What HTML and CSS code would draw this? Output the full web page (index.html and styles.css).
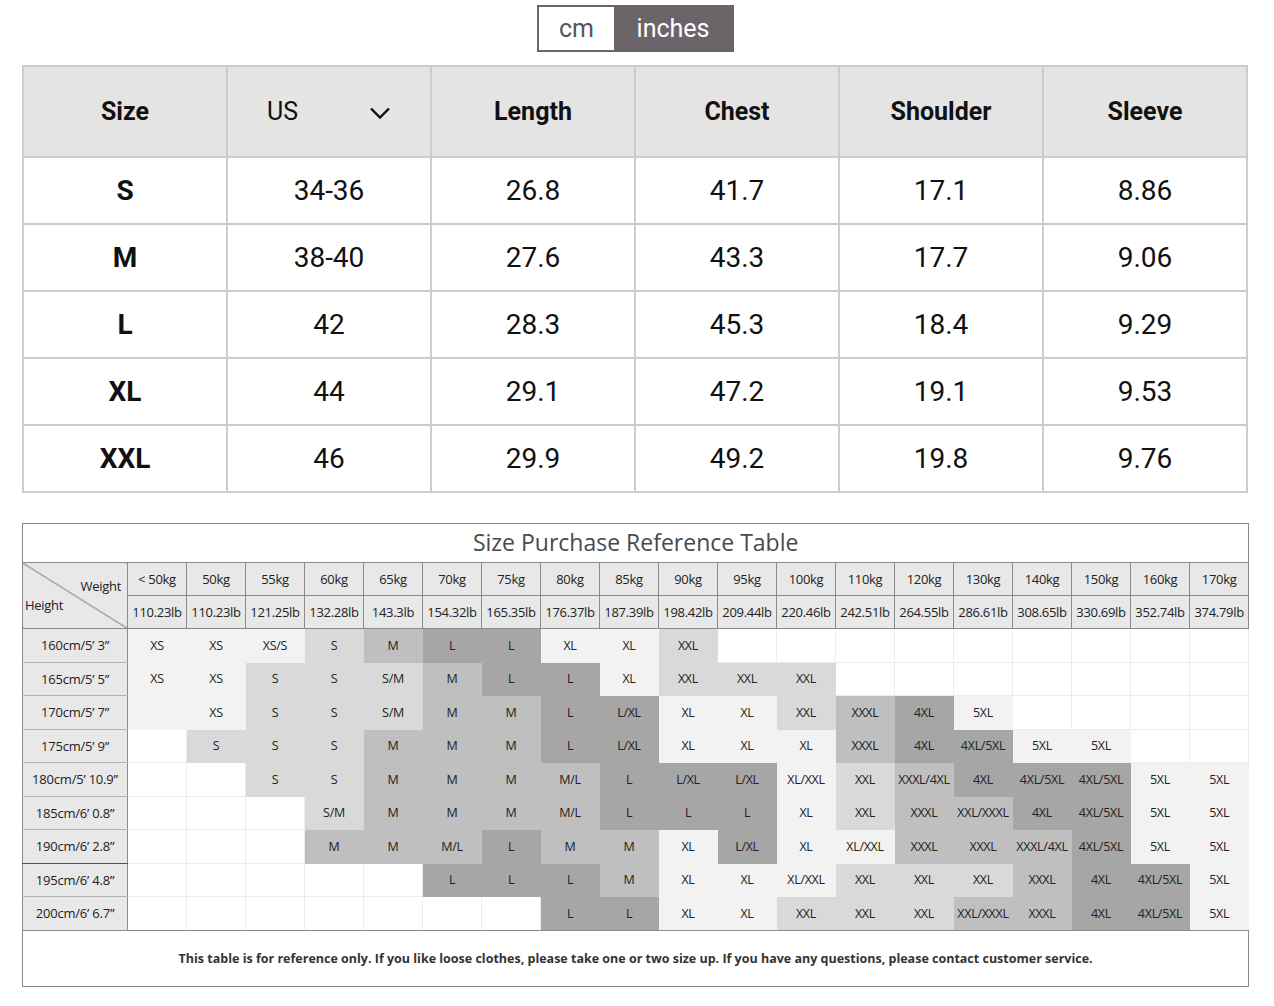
FILE: index.html
```html
<!DOCTYPE html>
<html lang="en">
<head>
<meta charset="utf-8">
<title>Size Chart</title>
<link rel="stylesheet" href="styles.css">
</head>
<body>
<div class="page">
  <div class="toggle-wrap">
    <div class="toggle">
      <span class="opt">cm</span>
      <span class="opt active">inches</span>
    </div>
  </div>

  <table class="size-table">
    <thead>
      <tr>
        <th>Size</th>
        <th class="us-cell"><div class="select"><span>US</span><svg width="22" height="14" viewBox="0 0 22 14"><polyline points="2,2.5 11,11.5 20,2.5" fill="none" stroke="#111" stroke-width="2.4"/></svg></div></th>
        <th>Length</th>
        <th>Chest</th>
        <th>Shoulder</th>
        <th>Sleeve</th>
      </tr>
    </thead>
    <tbody>
      <tr><td class="sz">S</td><td>34-36</td><td>26.8</td><td>41.7</td><td>17.1</td><td>8.86</td></tr>
      <tr><td class="sz">M</td><td>38-40</td><td>27.6</td><td>43.3</td><td>17.7</td><td>9.06</td></tr>
      <tr><td class="sz">L</td><td>42</td><td>28.3</td><td>45.3</td><td>18.4</td><td>9.29</td></tr>
      <tr><td class="sz">XL</td><td>44</td><td>29.1</td><td>47.2</td><td>19.1</td><td>9.53</td></tr>
      <tr><td class="sz">XXL</td><td>46</td><td>29.9</td><td>49.2</td><td>19.8</td><td>9.76</td></tr>
    </tbody>
  </table>

  <table class="ref-table">
    <colgroup>
      <col class="lblcol">
      <col span="19" class="wcol">
    </colgroup>
    <tr><td class="title" colspan="20">Size Purchase Reference Table</td></tr>
    <tr class="hrow">
      <td class="corner" rowspan="2"><span class="w">Weight</span><span class="h">Height</span></td>
      <td>&lt; 50kg</td><td>50kg</td><td>55kg</td><td>60kg</td><td>65kg</td><td>70kg</td><td>75kg</td><td>80kg</td><td>85kg</td><td>90kg</td><td>95kg</td><td>100kg</td><td>110kg</td><td>120kg</td><td>130kg</td><td>140kg</td><td>150kg</td><td>160kg</td><td>170kg</td>
    </tr>
    <tr class="hrow">
      <td>110.23lb</td><td>110.23lb</td><td>121.25lb</td><td>132.28lb</td><td>143.3lb</td><td>154.32lb</td><td>165.35lb</td><td>176.37lb</td><td>187.39lb</td><td>198.42lb</td><td>209.44lb</td><td>220.46lb</td><td>242.51lb</td><td>264.55lb</td><td>286.61lb</td><td>308.65lb</td><td>330.69lb</td><td>352.74lb</td><td>374.79lb</td>
    </tr>
    <tr class="drow">
      <td class="lbl">160cm/5’ 3”</td>
      <td class="a">XS</td><td class="a">XS</td><td class="a">XS/S</td><td class="b">S</td><td class="c">M</td><td class="d">L</td><td class="d">L</td><td class="a">XL</td><td class="a">XL</td><td class="b">XXL</td><td></td><td></td><td></td><td></td><td></td><td></td><td></td><td></td><td></td>
    </tr>
    <tr class="drow">
      <td class="lbl">165cm/5’ 5”</td>
      <td class="a">XS</td><td class="a">XS</td><td class="b">S</td><td class="b">S</td><td class="b">S/M</td><td class="c">M</td><td class="d">L</td><td class="d">L</td><td class="a">XL</td><td class="b">XXL</td><td class="b">XXL</td><td class="b">XXL</td><td></td><td></td><td></td><td></td><td></td><td></td><td></td>
    </tr>
    <tr class="drow">
      <td class="lbl">170cm/5’ 7”</td>
      <td class="a"></td><td class="a">XS</td><td class="b">S</td><td class="b">S</td><td class="b">S/M</td><td class="c">M</td><td class="c">M</td><td class="d">L</td><td class="d">L/XL</td><td class="a">XL</td><td class="a">XL</td><td class="b">XXL</td><td class="c">XXXL</td><td class="d">4XL</td><td class="a">5XL</td><td></td><td></td><td></td><td></td>
    </tr>
    <tr class="drow">
      <td class="lbl">175cm/5’ 9”</td>
      <td></td><td class="b">S</td><td class="b">S</td><td class="b">S</td><td class="c">M</td><td class="c">M</td><td class="c">M</td><td class="d">L</td><td class="d">L/XL</td><td class="a">XL</td><td class="a">XL</td><td class="a">XL</td><td class="c">XXXL</td><td class="d">4XL</td><td class="d">4XL/5XL</td><td class="a">5XL</td><td class="a">5XL</td><td></td><td></td>
    </tr>
    <tr class="drow">
      <td class="lbl">180cm/5’ 10.9”</td>
      <td></td><td></td><td class="b">S</td><td class="b">S</td><td class="c">M</td><td class="c">M</td><td class="c">M</td><td class="c">M/L</td><td class="d">L</td><td class="d">L/XL</td><td class="d">L/XL</td><td class="a">XL/XXL</td><td class="b">XXL</td><td class="c">XXXL/4XL</td><td class="d">4XL</td><td class="d">4XL/5XL</td><td class="d">4XL/5XL</td><td class="a">5XL</td><td class="a">5XL</td>
    </tr>
    <tr class="drow">
      <td class="lbl">185cm/6’ 0.8”</td>
      <td></td><td></td><td></td><td class="b">S/M</td><td class="c">M</td><td class="c">M</td><td class="c">M</td><td class="c">M/L</td><td class="d">L</td><td class="d">L</td><td class="d">L</td><td class="a">XL</td><td class="b">XXL</td><td class="c">XXXL</td><td class="c">XXL/XXXL</td><td class="d">4XL</td><td class="d">4XL/5XL</td><td class="a">5XL</td><td class="a">5XL</td>
    </tr>
    <tr class="drow">
      <td class="lbl dark-bottom">190cm/6’ 2.8”</td>
      <td></td><td></td><td></td><td class="c">M</td><td class="c">M</td><td class="c">M/L</td><td class="d">L</td><td class="c">M</td><td class="c">M</td><td class="a">XL</td><td class="d">L/XL</td><td class="a">XL</td><td class="a">XL/XXL</td><td class="c">XXXL</td><td class="c">XXXL</td><td class="c">XXXL/4XL</td><td class="d">4XL/5XL</td><td class="a">5XL</td><td class="a">5XL</td>
    </tr>
    <tr class="drow">
      <td class="lbl">195cm/6’ 4.8”</td>
      <td></td><td></td><td></td><td></td><td></td><td class="d">L</td><td class="d">L</td><td class="d">L</td><td class="c">M</td><td class="a">XL</td><td class="a">XL</td><td class="a">XL/XXL</td><td class="b">XXL</td><td class="b">XXL</td><td class="b">XXL</td><td class="c">XXXL</td><td class="d">4XL</td><td class="d">4XL/5XL</td><td class="a">5XL</td>
    </tr>
    <tr class="drow last">
      <td class="lbl">200cm/6’ 6.7”</td>
      <td></td><td></td><td></td><td></td><td></td><td></td><td></td><td class="d">L</td><td class="d">L</td><td class="a">XL</td><td class="a">XL</td><td class="b">XXL</td><td class="b">XXL</td><td class="b">XXL</td><td class="c">XXL/XXXL</td><td class="c">XXXL</td><td class="d">4XL</td><td class="d">4XL/5XL</td><td class="a">5XL</td>
    </tr>
    <tr><td class="note" colspan="20">This table is for reference only. If you like loose clothes, please take one or two size up. If you have any questions, please contact customer service.</td></tr>
  </table>
</div>
</body>
</html>
```

FILE: styles.css
```css
* { box-sizing: border-box; }

html, body {
  margin: 0;
  padding: 0;
  background: #ffffff;
}

.page {
  padding: 5px 22px 0 22px;
  width: 1274px;
  font-family: Roboto, "Liberation Sans", sans-serif;
  color: #111;
}

.toggle-wrap {
  display: flex;
  justify-content: center;
  margin-bottom: 13px;
  padding-right: 3px;
}

.toggle {
  display: flex;
  height: 47px;
  border: 2px solid #6b6569;
  background: #6b6569;
}

.opt {
  display: flex;
  align-items: center;
  justify-content: center;
  font-size: 25px;
  color: #fff;
}

.opt:first-child {
  width: 75px;
  background: #fff;
  color: #555;
}

.opt.active {
  width: 118px;
}

/* top size table */
.size-table {
  width: 1226px;
  border-collapse: collapse;
  table-layout: fixed;
  border: 2px solid #cccccc;
}

.size-table th,
.size-table td {
  border: 2px solid #cccccc;
  text-align: center;
  vertical-align: middle;
}

.size-table th {
  height: 91px;
  background: #e4e4e4;
  font-size: 25px;
  font-weight: 700;
}

.size-table td {
  height: 67px;
  font-size: 28px;
  font-weight: 400;
}

.size-table td.sz {
  font-weight: 700;
}

.us-cell .select {
  display: flex;
  align-items: center;
  justify-content: space-between;
  margin: 0 18px 0 20px;
  height: 58px;
  padding: 0 20px 0 18px;
  background: #e5e5e5;
  font-weight: 400;
}

.us-cell svg {
  display: block;
  margin-top: 2px;
}

/* reference table */
.ref-table {
  margin-top: 30px;
  width: 1226px;
  border-collapse: collapse;
  table-layout: fixed;
  border: 1px solid #8a8a8a;
  font-family: "Open Sans", "Noto Sans", sans-serif;
  font-size: 12.5px;
  color: #222;
}

.ref-table col.lblcol { width: 105px; }
.ref-table col.wcol { width: 59px; }

.ref-table td {
  text-align: center;
  vertical-align: middle;
  padding: 0;
  border: 1px solid #ececec;
  white-space: nowrap;
  overflow: hidden;
  letter-spacing: -0.3px;
}

.ref-table td.title {
  height: 39px;
  font-size: 23px;
  color: #4a4a4a;
  letter-spacing: 0;
  border: 1px solid #8a8a8a;
  padding-bottom: 2px;
}

.ref-table .hrow td {
  height: 33px;
  background: #e8e8e8;
  border: 1px solid #8a8a8a;
  font-size: 13px;
}

.ref-table td.corner {
  position: relative;
  background-color: #e8e8e8;
  background-image: linear-gradient(to top right, transparent calc(50% - 0.7px), #555 50%, transparent calc(50% + 0.7px));
  border: 1px solid #8a8a8a;
}

.corner .w {
  position: absolute;
  right: 6px;
  top: 14px;
  font-size: 13px;
}

.corner .h {
  position: absolute;
  left: 2px;
  top: 33px;
  font-size: 13px;
}

.ref-table .drow td {
  height: 33.5px;
}

.ref-table td.lbl {
  background: #e8e8e8;
  border-left: 1px solid #8a8a8a;
  border-right: 1px solid #8a8a8a;
  border-top: 1px solid #b0b0b0;
  border-bottom: 1px solid #b0b0b0;
  font-size: 13px;
  letter-spacing: -0.2px;
}

.ref-table td.lbl.dark-bottom {
  border-bottom: 1px solid #555;
}

.ref-table .drow.last td {
  border-bottom: 1px solid #8a8a8a;
}

.ref-table td.a { background: #f2f2f2; border-color: #f2f2f2; }
.ref-table td.b { background: #d9d9d9; border-color: #d9d9d9; }
.ref-table td.c { background: #bfbfbf; border-color: #bfbfbf; }
.ref-table td.d { background: #a6a6a6; border-color: #a6a6a6; }

.ref-table td.note {
  height: 56px;
  font-size: 12.5px;
  font-weight: 700;
  color: #333;
  letter-spacing: 0;
  border: 1px solid #8a8a8a;
}
```
